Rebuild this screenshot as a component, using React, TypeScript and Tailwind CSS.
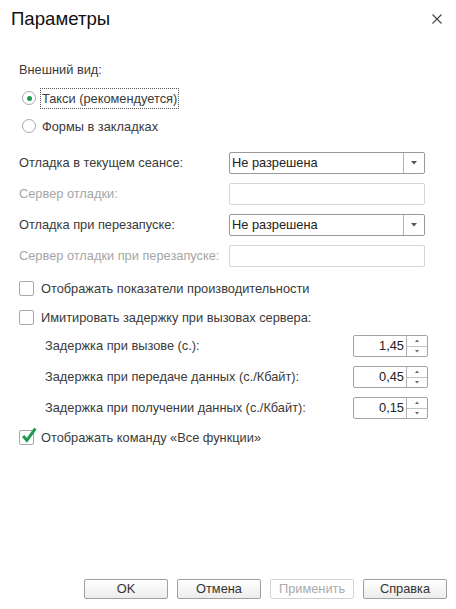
import React from 'react';

function Radio({ checked, label, focused }: { checked?: boolean; label: string; focused?: boolean }) {
  return (
    <div className="h-[28px] flex items-center pl-[3px]">
      <span className="w-[14px] h-[14px] rounded-full border border-[#a8a8a8] bg-white flex items-center justify-center shrink-0">
        {checked && <span className="w-[5px] h-[5px] rounded-full bg-[#1b9b4b]" />}
      </span>
      <span
        className={`ml-[5px] px-[1px] leading-[19px] ${
          focused ? 'outline outline-1 outline-dotted outline-[#555]' : ''
        }`}
      >
        {label}
      </span>
    </div>
  );
}

function Checkbox({ checked, label }: { checked?: boolean; label: string }) {
  return (
    <div className="h-[29px] flex items-center">
      <span className="relative w-[15px] h-[15px] rounded-[2px] border border-[#a8a8a8] bg-white shrink-0">
        {checked && (
          <svg className="absolute left-[1px] top-[-4px]" width="17" height="17" viewBox="0 0 16 16">
            <path d="M2 8.5 L5.5 12.5 L13.5 1.5" fill="none" stroke="#1b9b4b" strokeWidth="2.8" />
          </svg>
        )}
      </span>
      <span className="ml-[7px]">{label}</span>
    </div>
  );
}

function Select({ value }: { value: string }) {
  return (
    <div className="w-[196px] h-[22px] border border-[#9a9a9a] rounded-[2px] bg-white flex">
      <span className="flex-1 pl-[2px] flex items-center text-[#222]">{value}</span>
      <span className="w-[21px] border-l border-[#b4b4b4] flex items-center justify-center">
        <svg width="6" height="4" viewBox="0 0 6 4">
          <path d="M0 0 H6 L3 3.5 Z" fill="#555" />
        </svg>
      </span>
    </div>
  );
}

function Spin({ value }: { value: string }) {
  return (
    <div className="w-[75px] h-[22px] border border-[#a4a4a4] rounded-[2px] bg-white flex">
      <span className="flex-1 pr-[2px] flex items-center justify-end text-[#222]">{value}</span>
      <span className="w-[21px] border-l border-[#b4b4b4] flex flex-col">
        <span className="flex-1 border-b border-[#c4c4c4] flex items-center justify-center">
          <svg width="4" height="3" viewBox="0 0 4 3">
            <path d="M0 3 H4 L2 0.5 Z" fill="#666" />
          </svg>
        </span>
        <span className="flex-1 flex items-center justify-center">
          <svg width="4" height="3" viewBox="0 0 4 3">
            <path d="M0 0 H4 L2 2.5 Z" fill="#666" />
          </svg>
        </span>
      </span>
    </div>
  );
}

function Button({ label, disabled }: { label: string; disabled?: boolean }) {
  return (
    <button
      className={`w-[84px] h-[20px] rounded-[2px] border text-[12.8px] leading-none ${
        disabled
          ? 'border-[#d4d4d4] text-[#aaaaaa] bg-white'
          : 'border-[#a0a0a0] text-[#333] bg-gradient-to-b from-white to-[#ececec]'
      }`}
    >
      {label}
    </button>
  );
}

export default function App() {
  return (
    <div className="w-[456px] h-[609px] bg-white flex flex-col font-['Liberation_Sans',Arial,sans-serif] text-[12.8px] text-[#3a3a3a]">
      {/* Header */}
      <div className="h-[38px] flex items-center justify-between pl-[11px] pr-[14px]">
        <span className="text-[18.6px] text-[#111]">Параметры</span>
        <svg width="10" height="10" viewBox="0 0 10 10">
          <path d="M0.5 0.5 L9.5 9.5 M9.5 0.5 L0.5 9.5" stroke="#444" strokeWidth="1.1" />
        </svg>
      </div>

      <div className="flex-1 flex flex-col pl-[19px] pr-[31px]">
        <div className="mt-[22px] h-[20px] flex items-center">Внешний вид:</div>
        <div className="mt-[4px]">
          <Radio checked focused label="Такси (рекомендуется)" />
          <Radio label="Формы в закладках" />
        </div>

        {/* Debug settings */}
        <div className="mt-[12px] flex flex-col gap-[9px]">
          <div className="flex items-center">
            <span className="w-[210px]">Отладка в текущем сеансе:</span>
            <Select value="Не разрешена" />
          </div>
          <div className="flex items-center">
            <span className="w-[210px] text-[#a6a6a6]">Сервер отладки:</span>
            <div className="w-[196px] h-[22px] border border-[#d6d6d6] rounded-[2px]" />
          </div>
          <div className="flex items-center">
            <span className="w-[210px]">Отладка при перезапуске:</span>
            <Select value="Не разрешена" />
          </div>
          <div className="flex items-center">
            <span className="w-[210px] text-[#a6a6a6]">Сервер отладки при перезапуске:</span>
            <div className="w-[196px] h-[22px] border border-[#d6d6d6] rounded-[2px]" />
          </div>
        </div>

        <div className="mt-[7px]">
          <Checkbox label="Отображать показатели производительности" />
          <Checkbox label="Имитировать задержку при вызовах сервера:" />
        </div>

        <div className="mt-[3px] flex flex-col gap-[9px] pl-[26px] mr-[-3px]">
          <div className="flex items-center justify-between">
            <span>Задержка при вызове (с.):</span>
            <Spin value="1,45" />
          </div>
          <div className="flex items-center justify-between">
            <span>Задержка при передаче данных (с./Кбайт):</span>
            <Spin value="0,45" />
          </div>
          <div className="flex items-center justify-between">
            <span>Задержка при получении данных (с./Кбайт):</span>
            <Spin value="0,15" />
          </div>
        </div>

        <div className="mt-[4px]">
          <Checkbox checked label="Отображать команду «Все функции»" />
        </div>
      </div>

      {/* Footer */}
      <div className="flex justify-end gap-[9px] pr-[9px] pb-[10px]">
        <Button label="OK" />
        <Button label="Отмена" />
        <Button label="Применить" disabled />
        <Button label="Справка" />
      </div>
    </div>
  );
}
